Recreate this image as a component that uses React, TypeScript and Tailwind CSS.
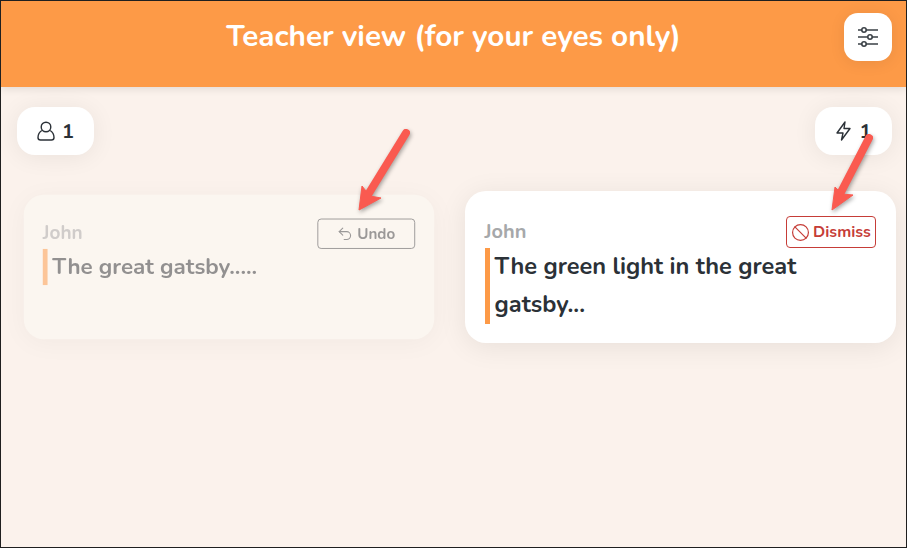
import type { ReactNode } from "react";
import { Ban, Undo2 } from "lucide-react";

const ARROW_LEFT = "361,186 358,210 380,198 369,196";
const ARROW_RIGHT = "834,187 831,210 852,195 841,194";

// sliders icon: three lines, knobs left / right / left
const SlidersIcon = () => {
  return (
    <svg width="24" height="24" viewBox="0 0 24 24" fill="none" stroke="#3a4046" strokeWidth="1.6">
      <path d="M2 5H22M2 12H22M2 19H22" />
      <circle cx="8" cy="5" r="2.2" fill="white" />
      <circle cx="14" cy="12" r="2.2" fill="white" />
      <circle cx="8" cy="19" r="2.2" fill="white" />
    </svg>
  );
};

const UserIcon = () => {
  return (
    <svg width="18" height="20" viewBox="0 0 18 20" fill="none" stroke="#2b3137" strokeWidth="1.4">
      <circle cx="9" cy="6" r="4.8" />
      <path d="M4.8 9.5C2.4 11 1 13.5 1 16.5C1 18 2 19 3.5 19H14.5C16 19 17 18 17 16.5C17 13.5 15.6 11 13.2 9.5" />
    </svg>
  );
};

const BoltIcon = () => {
  return (
    <svg width="15" height="20" viewBox="0 0 15 20" fill="none" stroke="#2b3137" strokeWidth="1.4" strokeLinejoin="round">
      <path d="M9 1L1 12H7L5.5 19L14 7.5H8Z" />
    </svg>
  );
};

const Arrow = ({ x1, y1, x2, y2, head }: { x1: number; y1: number; x2: number; y2: number; head: string }) => {
  return (
    <svg className="absolute left-0 top-0 drop-shadow-[1px_2px_2px_rgba(0,0,0,0.35)]" width="907" height="548" viewBox="0 0 907 548" fill="none">
      <line x1={x1} y1={y1} x2={x2} y2={y2} stroke="#fa5a50" strokeWidth="8" strokeLinecap="round" />
      <polygon points={head} fill="#fa5a50" stroke="#fa5a50" strokeWidth="1" strokeLinejoin="round" />
    </svg>
  );
};

const Pill = ({ icon, gap }: { icon: ReactNode; gap: string }) => {
  return (
    <div className={`h-12 w-[77px] bg-white rounded-[18px] flex items-center justify-center shadow-[0_2px_24px_rgba(0,0,0,0.07)] ${gap}`}>
      {icon}
      <span className="text-[20px] font-bold text-[#2b3137] mt-[1px]">1</span>
    </div>
  );
};

const Card = ({ text, action, faded }: { text: string; action: ReactNode; faded?: boolean }) => {
  return (
    <div className={`rounded-[21px] pt-[25px] pb-[19px] px-5 shadow-[0_4px_28px_rgba(0,0,0,0.08)] ${faded ? "bg-[#fbfaf4] opacity-50 scale-95" : "bg-white"}`}>
      <div className="flex items-center justify-between h-[32px] -mb-[1px]">
        <span className="text-[20px] font-bold text-[#a6a8aa] leading-none">John</span>
        {action}
      </div>
      <div className="border-l-[5px] border-[#fd9a47] pl-[5px] mt-[1px] w-fit">
        <p className="text-[23.6px] font-bold leading-[38px] text-[#2b3137] max-w-[345px] -translate-y-[1px]">{text}</p>
      </div>
    </div>
  );
};

export default function App() {
  return (
    <div className="relative w-[907px] h-[548px] overflow-hidden bg-[#fbf2ec] border-x border-b border-[#1f1f1f] font-['Nunito','Noto_Sans',sans-serif]">
      <header className="relative h-[87px] bg-[#fd9a47] flex items-center justify-center shadow-[0_2px_8px_rgba(0,0,0,0.1)] border-t border-[#1f1f1f]">
        <h1 className="text-[29.7px] font-bold text-white -mt-[16px]">Teacher view (for your eyes only)</h1>
        <button className="absolute right-[14px] top-[12px] w-12 h-12 bg-white rounded-[14px] flex items-center justify-center shadow-[0_2px_16px_rgba(0,0,0,0.08)]">
          <SlidersIcon />
        </button>
      </header>

      <div className="flex justify-between pl-4 pr-[14px] pt-5">
        <Pill icon={<UserIcon />} gap="gap-[7px]" />
        <Pill icon={<BoltIcon />} gap="gap-[9px]" />
      </div>

      <div className="grid grid-cols-2 gap-[20px] pl-[12px] pr-[10px] pt-[36px]">
        <Card
          faded
          text="The great gatsby....."
          action={
            <span className="h-[32px] w-[103px] border border-[#3e4247] rounded-[4px] flex items-center justify-center gap-1 text-[16px] font-bold text-[#3e4247]">
              <Undo2 size={18} strokeWidth={1.5} />
              Undo
            </span>
          }
        />
        <Card
          text="The green light in the great gatsby..."
          action={
            <span className="h-[32px] w-[90px] border border-[#c63d38] rounded-[4px] flex items-center justify-center gap-[3px] text-[16px] font-bold text-[#c63d38]">
              <Ban size={19} strokeWidth={1.5} />
              Dismiss
            </span>
          }
        />
      </div>

      <Arrow x1={405} y1={133} x2={365} y2={198} head={ARROW_LEFT} />
      <Arrow x1={868} y1={138} x2={838} y2={196} head={ARROW_RIGHT} />
    </div>
  );
}
